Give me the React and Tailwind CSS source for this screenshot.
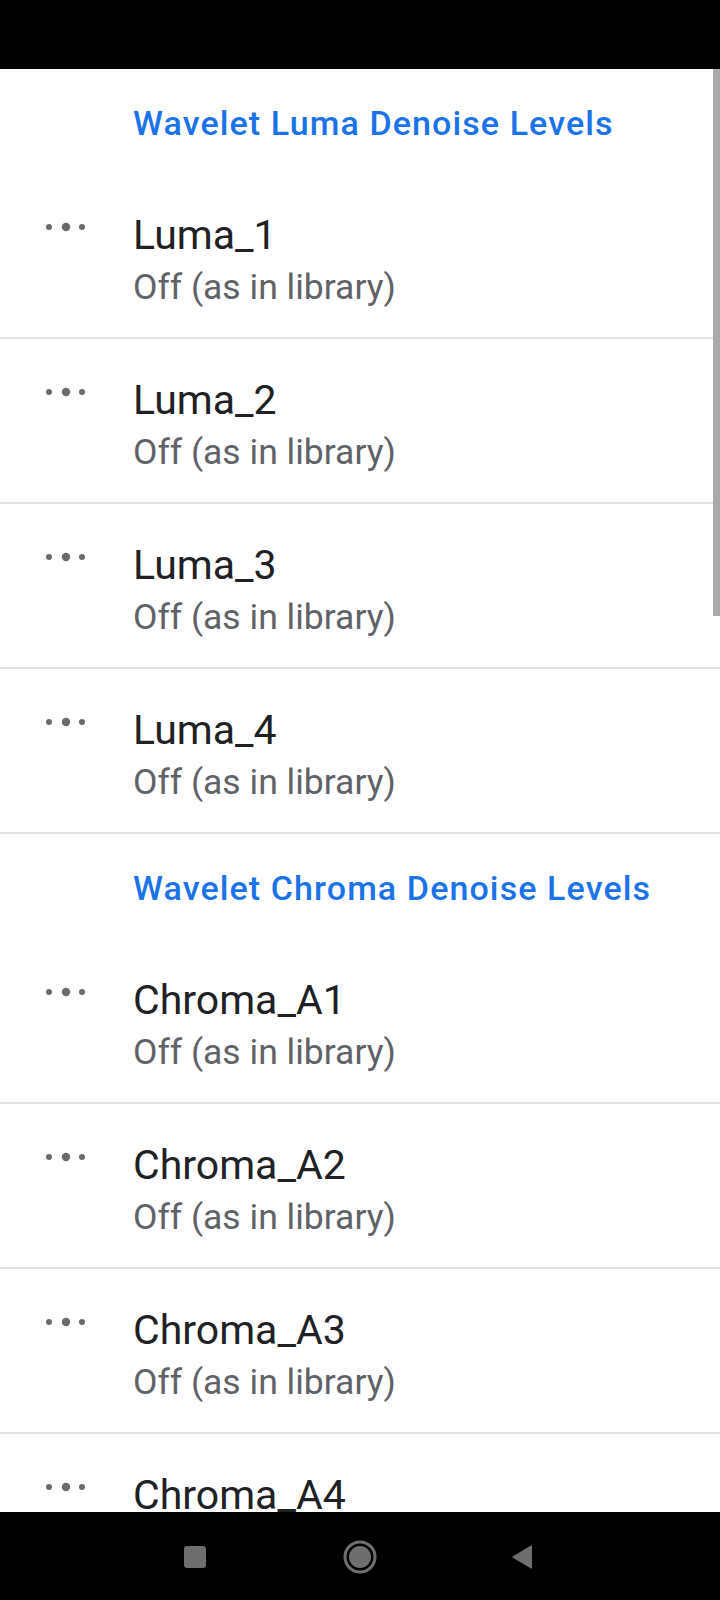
import React from "react";

const font = { fontFamily: "Roboto, 'Noto Sans', sans-serif" };

const secciones = [
  {
    titulo: "Wavelet Luma Denoise Levels",
    items: ["Luma_1", "Luma_2", "Luma_3", "Luma_4"],
  },
  {
    titulo: "Wavelet Chroma Denoise Levels",
    items: ["Chroma_A1", "Chroma_A2", "Chroma_A3", "Chroma_A4"],
  },
];

/* ======================
ICONOS
====================== */

function Dots() {
  return (
    <svg width="44" height="14" viewBox="0 0 44 14">
      <circle cx="6" cy="7" r="3" fill="#6b6b6b" />
      <circle cx="23" cy="7" r="4.2" fill="#6b6b6b" />
      <circle cx="39" cy="7" r="3" fill="#6b6b6b" />
    </svg>
  );
}

function NavBar() {
  return (
    <div className="h-[88px] bg-black relative shrink-0">
      <div className="absolute left-[184px] top-[34px] w-[22px] h-[22px] rounded-[3px] bg-[#6e6e6e]" />
      <svg
        className="absolute left-[343px] top-[28px]"
        width="34"
        height="34"
        viewBox="0 0 34 34"
      >
        <circle cx="17" cy="17" r="15" fill="none" stroke="#6e6e6e" strokeWidth="3" />
        <circle cx="17" cy="17" r="11" fill="#6e6e6e" />
      </svg>
      <svg
        className="absolute left-[510px] top-[32px]"
        width="24"
        height="26"
        viewBox="0 0 24 26"
      >
        <path d="M22 2 L22 24 Q22 25 21 24.4 L2.5 13.6 Q1.5 13 2.5 12.4 L21 1.6 Q22 1 22 2 Z" fill="#6e6e6e" />
      </svg>
    </div>
  );
}

/* ======================
FILA
====================== */

function Fila({ nombre }) {
  return (
    <div className="h-[165px] shrink-0 border-b-2 border-[#e3e3e3] flex">
      <div className="w-[133px] shrink-0 pl-[43px] pt-[46px]">
        <Dots />
      </div>
      <div className="pt-[35px]">
        <div className="text-[41px] leading-[52px] text-[#202124]">{nombre}</div>
        <div className="text-[35.5px] leading-[52px] text-[#5f6368]">
          Off (as in library)
        </div>
      </div>
    </div>
  );
}

export default function App() {
  return (
    <div className="w-[720px] h-[1600px] flex flex-col bg-white overflow-hidden" style={font}>
      {/* STATUS BAR */}
      <div className="h-[69px] bg-black shrink-0" />

      {/* LISTA */}
      <div className="flex-1 relative overflow-hidden">
        <div className="flex flex-col">
          {secciones.map((sec) => (
            <React.Fragment key={sec.titulo}>
              <div className="h-[105px] shrink-0 pl-[133px] pt-[33px]">
                <div className="text-[34px] leading-[42px] font-medium text-[#1a73e8] tracking-[1.1px] whitespace-nowrap">
                  {sec.titulo}
                </div>
              </div>
              {sec.items.map((it) => (
                <Fila key={it} nombre={it} />
              ))}
            </React.Fragment>
          ))}
        </div>

        {/* SCROLLBAR */}
        <div className="absolute right-0 top-0 w-[7px] h-[547px] bg-[#a9a9ab]" />
      </div>

      {/* NAV */}
      <NavBar />
    </div>
  );
}
